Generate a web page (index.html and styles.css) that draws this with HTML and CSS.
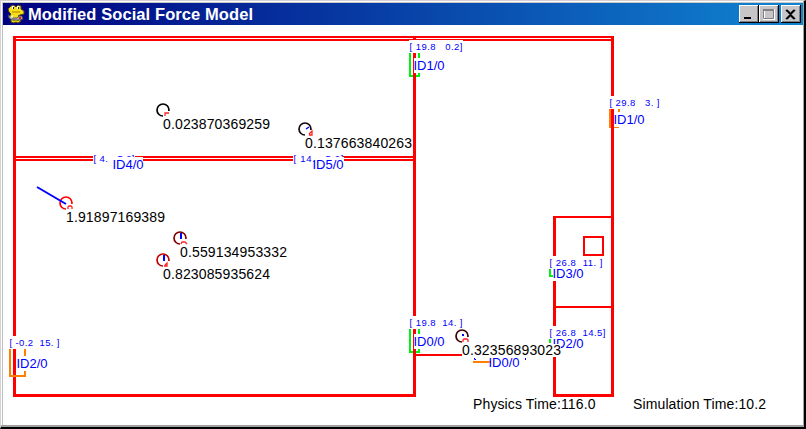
FILE: index.html
```html
<!DOCTYPE html>
<html lang="en">
<head>
<meta charset="utf-8">
<title>Modified Social Force Model</title>
<link rel="stylesheet" href="styles.css">
</head>
<body>
<div class="window">
  <header class="titlebar">
    <svg class="logo" viewBox="0 0 18 20" width="18" height="20">
      <path d="M4 2l2-1 2 1 1 1 2-2 3 1v3l3 2v3l-4 1-2 1 2 2 1 3-3 2-2-1-2 1-3-1v-3l-2-2 2-3-2-2-1-3z" fill="#f7dc18" stroke="#4c431f"/>
      <path d="M5 2h2v3H5zM10 2h2v3h-2z" fill="#fff"/>
      <path d="M6 3h1v2H6zM11 3h1v2h-1z" fill="#222"/>
      <path d="M5 8h8M6 16l2 1M10 17l2-1" fill="none" stroke="#a98700"/>
      <path d="M1 11l2 1 2 2 5 0 2-2 3 0 1 3-3 1-8 0-3-2z" fill="#a9a9a9" stroke="#444" stroke-width=".8"/>
      <path d="M3 13h3M5 11v3" stroke="#eee"/>
      <path d="M12 14h2" stroke="#d22" stroke-width="2"/>
    </svg>
    <h1 class="title"><svg width="228" height="22"><text x="0" y="17" textLength="225">Modified Social Force Model</text></svg></h1>
    <div class="controls">
      <button class="btn" aria-label="Minimize"><svg width="20" height="18"><path d="M5 12h7v2H5z"/></svg></button>
      <button class="btn" aria-label="Maximize"><svg width="20" height="18" fill="none"><path d="M5 5h10v9H5z" stroke="#fff" stroke-width="2"/><path d="M4.500 4.500h10v9h-10z" stroke="#808080"/><path d="M4 5h11" stroke="#808080" stroke-width="2"/></svg></button>
      <button class="btn close" aria-label="Close"><svg width="20" height="18"><path d="M5 5h2v1h1v1h1v1h1V7h1V6h1V5h2v1h-1v1h-1v1h-1v1h-1v1h1v1h1v1h1v1h1v1h-2v-1h-1v-1h-1v-1H9v1H8v1H7v1H5v-1h1v-1h1v-1h1v-1h1V9H8V8H7V7H6V6H5z" stroke="#000" stroke-width=".6"/></svg></button>
    </div>
  </header>
  <svg class="scene" viewBox="3 26 800 399" width="800" height="399">
    <!-- doors -->
    <g fill="#00f010">
      <path d="M409 53h2v22h7v-2h2v4h-11zM418 53h2v5h-2z"/>
      <path d="M409 329h2v22h7v-2h2v4h-11zM418 329h2v5h-2z"/>
      <path d="M549 269h2v6h3v2h-5zM549 339h2v4h-2z"/>
    </g>
    <g fill="#ff8000">
      <path d="M609 109h2v18h8v1h-10zM618 109h2v3h-2z"/>
      <path d="M9 349h2v26h13v-4h2v6H9zM24 349h2v7h-2z"/>
      <path d="M473 361h18v2h-18z"/>
    </g>
    <!-- walls -->
    <g fill="#f00">
      <path d="M13 36h600v2H13zM13 39h600v2H13zM13 36h3v361h-3zM13 394h403v3H13zM413 37h3v360h-3zM611 36h3v361h-3z"/>
      <path d="M14 156h400v2H14zM14 159h400v2H14zM415 354h47v2h-47z"/>
      <path d="M553 216h60v2h-60zM553 306h60v2h-60zM553 216h3v181h-3zM553 394h61v3h-61z"/>
    </g>
    <path d="M584 237h19v18h-19z" fill="none" stroke="#f00" stroke-width="2"/>
    <path d="M24 349h2v7h-2zM24 371h2v6h-2zM9 375h17v2H9z" fill="#ff8000"/>
    <!-- label backgrounds -->
    <g fill="#fff">
      <path d="M409 40h54v13h-54zM414 58h31v15h-31z"/>
      <path d="M609 96h52v13h-52zM614 112h31v15h-31z"/>
      <path d="M93 153h42v13H93zM113 157h30v15h-30zM293 153h50v13h-50zM313 157h31v15h-31z"/>
      <path d="M8 336h52v13H8zM16 356h32v15H16z"/>
      <path d="M409 316h54v13h-54zM414 334h31v15h-31z"/>
      <path d="M549 256h55v13h-55zM553 267h31v14h-31zM549 326h59v13h-59zM553 336h31v15h-31z"/>
    </g>
    <g class="pos">
      <text x="409.500" y="50" textLength="53">[ 19.8 &#160; 0.2]</text>
      <text x="609.500" y="106" textLength="50">[ 29.8 &#160; 3. ]</text>
      <text x="93.500" y="162" textLength="41">[ 4. &#160; 5.2]</text>
      <text x="293.500" y="162" textLength="50">[ 14. &#160; 5.2]</text>
      <text x="9.500" y="346" textLength="50">[ -0.2 &#160;15. ]</text>
      <text x="409.500" y="326" textLength="53">[ 19.8 &#160;14. ]</text>
      <text x="549.500" y="266" textLength="53">[ 26.8 &#160;11. ]</text>
      <text x="549.500" y="336" textLength="56">[ 26.8 &#160;14.5]</text>
    </g>
    <path d="M110 157h26v8h-26zM314 157h30v8h-30z" fill="#fff"/>
    <g class="door-id">
      <text x="413.500" y="70" textLength="31">ID1/0</text>
      <text x="613.500" y="124" textLength="31">ID1/0</text>
      <text x="112.500" y="169" textLength="31">ID4/0</text>
      <text x="312.500" y="169" textLength="31">ID5/0</text>
      <text x="16.500" y="368" textLength="31">ID2/0</text>
      <text x="413.500" y="346" textLength="31">ID0/0</text>
      <text x="552.500" y="278" textLength="31">ID3/0</text>
      <text x="552.500" y="348" textLength="31">ID2/0</text>
      <text x="488.500" y="367" textLength="31">ID0/0</text>
    </g>
    <path d="M474.500 358v1.500h1.500M525.500 358v2" fill="none" stroke="#00f"/>
    <!-- pedestrians -->
    <g class="agent">
      <g stroke="#000"><circle cx="163" cy="110" r="6"/></g>
      <g stroke="#180808"><circle cx="305" cy="129" r="6"/></g>
      <g stroke="#f00"><circle cx="66" cy="203" r="6"/></g>
      <g stroke="#800000"><circle cx="180" cy="238" r="6"/></g>
      <g stroke="#c00000"><circle cx="163" cy="260" r="6"/></g>
      <g stroke="#400000"><circle cx="462" cy="336" r="6"/></g>
    </g>
    <path d="M163 111h9v7h-9zM305 130h9v7h-9zM66 204h9v7h-9zM180 239h9v7h-9zM163 261h9v7h-9zM462 337h9v7h-9zM462 344h99v13h-99z" fill="#fff"/>
    <g class="marks">
      <path d="M165 116v-3h4M309 134l3-3v4h-3M68 209v-2l1-1h2l1 1v2M181 244l1-2h3l2 2M165 265l2-2v3h-3M463 342v-2l1-1h3l1 1v2"/>
    </g>
    <g class="velocity">
      <path d="M66 204L37 187M181 239v-6M164 261v-6"/>
      <path d="M306 129l3-2" stroke-width="1.500"/>
      <path d="M462 335h2"/>
    </g>
    <g class="value">
      <text x="163" y="129" textLength="107">0.023870369259</text>
      <text x="305" y="148" textLength="107">0.137663840263</text>
      <text x="66" y="222" textLength="99">1.91897169389</text>
      <text x="180" y="257" textLength="107">0.559134953332</text>
      <text x="163" y="279" textLength="107">0.823085935624</text>
      <text x="462" y="355" textLength="99">0.32356893023</text>
      <text x="473" y="409" textLength="122.500">Physics Time:116.0</text>
      <text x="633" y="409" textLength="133">Simulation Time:10.2</text>
    </g>
  </svg>
</div>
</body>
</html>
```
FILE: styles.css
```css
* {
  box-sizing: border-box;
}

body {
  margin: 0;
  overflow: hidden;
  background: #000;
  font-family: "Liberation Sans", Arial, sans-serif;
}

.window {
  width: 806px;
  height: 429px;
  padding: 2px 0 0 2px;
  border-style: solid;
  border-width: 1px 2px 2px 1px;
  border-color: #d4d0d4 #000 #000 #d4d0d4;
  background: #fff;
  box-shadow: inset -1px -2px #a0a0a0, inset 1px 1px #fff, inset 2px 0 #c0c0c0, inset 0 2px #c8c8c8;
}

.titlebar {
  display: flex;
  align-items: center;
  height: 22px;
  margin-right: 1px;
  padding: 0 2px 0 4px;
  background: linear-gradient(90deg, #000080, #1084d0);
}

.logo {
  flex: none;
}

.title {
  margin: 0 0 0 3px;
  height: 22px;
  font-size: 16.5px;
  line-height: 22px;
}

.title svg {
  display: block;
  fill: #fff;
}

.controls {
  display: flex;
  margin-left: auto;
}

.btn {
  width: 20px;
  height: 18px;
  padding: 0;
  border: 0;
  background: #c8c5c8;
  box-shadow: inset -1px -1px #000, inset 1px 1px #fff, inset -2px -2px #808080;
}

.btn svg {
  display: block;
}

.close {
  margin-left: 2px;
}

.scene {
  display: block;
  flex: none;
  margin-top: 1px;
  background: #fff;
}

.pos {
  font-size: 9.5px;
  fill: #00f;
}

.door-id {
  font-size: 13px;
  fill: #00f;
}

.value {
  font-size: 14px;
  fill: #000;
}

.agent {
  fill: none;
  stroke-width: 1.7;
}

.marks {
  fill: none;
  stroke: #f22;
  stroke-width: 1.3;
}

.velocity {
  fill: none;
  stroke: #00f;
  stroke-width: 2;
}
```
